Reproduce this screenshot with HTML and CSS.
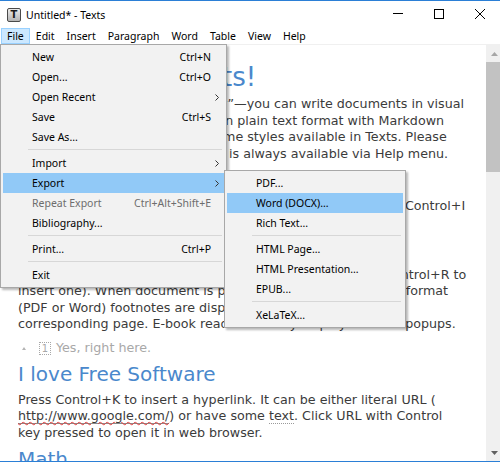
FILE: index.html
```html
<!DOCTYPE html>
<html>
<head>
<meta charset="utf-8">
<title>Untitled* - Texts</title>
<link rel="stylesheet" href="styles.css">
</head>
<body>
<div class="window">
  <div class="titlebar">
    <div class="app-icon">T</div>
    <div class="title">Untitled* - Texts</div>
    <div class="caption">
      <div class="cbtn"><svg width="10" height="10" viewBox="0 0 10 10"><path d="M0 4.5H10" stroke="#000" stroke-width="1"/></svg></div>
      <div class="cbtn"><svg width="10" height="10" viewBox="0 0 10 10"><rect x="0.5" y="0.5" width="9" height="9" fill="none" stroke="#000" stroke-width="1"/></svg></div>
      <div class="cbtn"><svg width="10" height="10" viewBox="0 0 10 10"><path d="M0 0L10 10M10 0L0 10" stroke="#000" stroke-width="1"/></svg></div>
    </div>
  </div>
  <div class="menubar">
    <span class="mitem active">File</span>
    <span class="mitem">Edit</span>
    <span class="mitem">Insert</span>
    <span class="mitem">Paragraph</span>
    <span class="mitem">Word</span>
    <span class="mitem">Table</span>
    <span class="mitem">View</span>
    <span class="mitem">Help</span>
  </div>
  <div class="rule"></div>
  <div class="main">
    <div class="doc">
      <h1 class="h1">Welcome to Texts!</h1>
      <p class="para">Texts is “semantic markup editor”—you can write documents in visual<br>editor and save your document in plain text format with Markdown<br>syntax. Here are examples of some styles available in Texts. Please<br>note that the full documentation is always available via Help menu.</p>
      <h2 class="h2">Italic and bold</h2>
      <p class="para">Select the text and press Control+B to make it bold or press Control+I<br>to make it italic.</p>
      <h2 class="h2">Footnotes</h2>
      <p class="para">Footnotes are numbered automatically by the app (press Control+R to<br>insert one). When document is printed or exported to paged format<br>(PDF or Word) footnotes are displayed at the bottom of<br>corresponding page. E-book readers usually display notes in popups.</p>
      <div class="footnote"><span class="fn-toggle"></span><span class="fn-num">1</span><span class="fn-text">Yes, right here.</span></div>
      <h2 class="h2">I love Free Software</h2>
      <p class="para">Press Control+K to insert a hyperlink. It can be either literal URL (<br><span class="url">http://www.google.com/</span>) or have some <span class="named-link">text</span>. Click URL with Control<br>key pressed to open it in web browser.</p>
      <h2 class="h2">Math</h2>
    </div>
    <div class="scrollbar">
      <div class="sb-btn"><svg width="7" height="4" viewBox="0 0 7 4"><path d="M0 4L3.5 0L7 4Z" fill="#a6a6a6"/></svg></div>
      <div class="sb-track"><div class="sb-thumb"></div></div>
      <div class="sb-btn"><svg width="7" height="4" viewBox="0 0 7 4"><path d="M0 0L3.5 4L7 0Z" fill="#606060"/></svg></div>
    </div>
  </div>

  <div class="menu file-menu">
    <div class="mi"><span class="label">New</span><span class="key">Ctrl+N</span><span class="arrow"></span></div>
    <div class="mi"><span class="label">Open...</span><span class="key">Ctrl+O</span><span class="arrow"></span></div>
    <div class="mi"><span class="label">Open Recent</span><span class="key"></span><span class="arrow"><svg width="4" height="7" viewBox="0 0 4 7"><path d="M0.5 0.5L3.5 3.5L0.5 6.5" fill="none" stroke="#333" stroke-width="1"/></svg></span></div>
    <div class="mi"><span class="label">Save</span><span class="key">Ctrl+S</span><span class="arrow"></span></div>
    <div class="mi"><span class="label">Save As...</span><span class="key"></span><span class="arrow"></span></div>
    <div class="sep"></div>
    <div class="mi"><span class="label">Import</span><span class="key"></span><span class="arrow"><svg width="4" height="7" viewBox="0 0 4 7"><path d="M0.5 0.5L3.5 3.5L0.5 6.5" fill="none" stroke="#333" stroke-width="1"/></svg></span></div>
    <div class="mi hl"><span class="label">Export</span><span class="key"></span><span class="arrow"><svg width="4" height="7" viewBox="0 0 4 7"><path d="M0.5 0.5L3.5 3.5L0.5 6.5" fill="none" stroke="#333" stroke-width="1"/></svg></span></div>
    <div class="mi disabled"><span class="label">Repeat Export</span><span class="key">Ctrl+Alt+Shift+E</span><span class="arrow"></span></div>
    <div class="mi"><span class="label">Bibliography...</span><span class="key"></span><span class="arrow"></span></div>
    <div class="sep"></div>
    <div class="mi"><span class="label">Print...</span><span class="key">Ctrl+P</span><span class="arrow"></span></div>
    <div class="sep"></div>
    <div class="mi"><span class="label">Exit</span><span class="key"></span><span class="arrow"></span></div>
  </div>

  <div class="menu sub-menu">
    <div class="mi"><span class="label">PDF...</span></div>
    <div class="mi hl"><span class="label">Word (DOCX)...</span></div>
    <div class="mi"><span class="label">Rich Text...</span></div>
    <div class="sep"></div>
    <div class="mi"><span class="label">HTML Page...</span></div>
    <div class="mi"><span class="label">HTML Presentation...</span></div>
    <div class="mi"><span class="label">EPUB...</span></div>
    <div class="sep"></div>
    <div class="mi"><span class="label">XeLaTeX...</span></div>
  </div>
</div>
</body>
</html>
```

FILE: styles.css
```css
* { box-sizing: border-box; }
html, body { margin: 0; padding: 0; }
body {
  width: 500px;
  height: 462px;
  overflow: hidden;
  background: #ffffff;
  font-family: "Noto Sans", sans-serif;
}
.window {
  position: relative;
  width: 500px;
  height: 462px;
  border-top: 1px solid #2b7fd6;
  border-bottom: 1px solid #2b7fd6;
  display: flex;
  flex-direction: column;
  overflow: hidden;
  background: #ffffff;
}

/* title bar */
.titlebar {
  height: 27px;
  flex: none;
  display: flex;
  align-items: center;
}
.app-icon {
  margin-left: 7px;
  width: 14px;
  height: 14px;
  border: 1px solid #4a4a4a;
  border-radius: 2px;
  background: linear-gradient(#ececec, #b4b4b4);
  color: #1a1a1a;
  font-family: "DejaVu Sans", sans-serif;
  font-weight: bold;
  font-size: 10px;
  line-height: 12px;
  text-align: center;
}
.title {
  margin-left: 5px;
  font-size: 10.5px;
  color: #000;
}
.caption {
  margin-left: auto;
  align-self: stretch;
  display: flex;
}
.cbtn {
  width: 41px;
  display: flex;
  justify-content: center;
  padding-top: 8px;
}
.cbtn svg { display: block; }

/* menu bar */
.menubar {
  height: 16px;
  flex: none;
  display: flex;
  padding-left: 1px;
  font-size: 10.5px;
  color: #000;
}
.mitem {
  border: 1px solid transparent;
  padding: 0 5px;
  line-height: 14px;
}
.mitem.active {
  background: #cce8ff;
  border-color: #99d1ff;
}
.rule {
  height: 1px;
  flex: none;
  background: #f0f0f0;
}

/* document */
.main {
  flex: 1;
  min-height: 0;
  display: flex;
}
.doc {
  flex: 1;
  min-width: 0;
  overflow: hidden;
  padding: 16px 0 0 18px;
  font-family: "DejaVu Sans", sans-serif;
  font-size: 12.7px;
  line-height: 16.6px;
  color: #3b3b3b;
  white-space: nowrap;
}
.h1 {
  margin: 0 0 3.2px;
  font-size: 26px;
  line-height: 32px;
  font-weight: normal;
  color: #4a88cc;
}
.h2 {
  margin: 5.7px 0;
  font-size: 20px;
  line-height: 24px;
  font-weight: normal;
  color: #4a88cc;
}
.para { margin: 0; }
.footnote {
  margin-top: 7px;
  height: 16.6px;
  display: flex;
  align-items: center;
  color: #a8a8a8;
}
.fn-toggle {
  margin-left: 4px;
  width: 0;
  height: 0;
  border-left: 2.5px solid transparent;
  border-right: 2.5px solid transparent;
  border-bottom: 3px solid #b4b4b4;
}
.fn-num {
  margin-left: 13px;
  width: 12px;
  height: 13px;
  border: 1px dotted #a8a8a8;
  font-size: 10px;
  line-height: 11px;
  text-align: center;
}
.fn-text { margin-left: 5px; }
.url {
  border-bottom: 1px solid #8a8a8a;
  text-decoration: underline wavy #e23b3b;
  text-decoration-thickness: 1px;
  text-underline-offset: 1px;
}
.named-link { border-bottom: 1px dotted #9a9a9a; }

/* scrollbar */
.scrollbar {
  width: 14px;
  flex: none;
  background: #f0f0f0;
  display: flex;
  flex-direction: column;
}
.sb-btn {
  height: 17px;
  flex: none;
  display: flex;
  align-items: center;
  justify-content: center;
  padding-left: 2px;
}
.sb-btn svg { display: block; }
.sb-track { flex: 1; }
.sb-thumb {
  height: 110px;
  background: #c2c2c2;
}

/* popup menus */
.menu {
  position: absolute;
  background: #f2f2f2;
  border: 1px solid #a8a8a8;
  padding: 2px;
  box-shadow: 2px 2px 2px rgba(0, 0, 0, 0.28);
  font-family: "Noto Sans", sans-serif;
  font-size: 10.5px;
  color: #000;
}
.file-menu { left: 0; top: 43px; width: 227px; }
.sub-menu { left: 224px; top: 169px; width: 182px; }
.mi {
  height: 20px;
  display: flex;
  align-items: center;
  padding-left: 29px;
}
.mi .label { flex: 1; }
.mi .arrow {
  width: 13px;
  display: flex;
  justify-content: flex-start;
  padding-left: 4px;
}
.mi .arrow svg { display: block; }
.mi.hl { background: #91c9f7; }
.mi.disabled { color: #6d6d6d; }
.sep {
  height: 1px;
  margin: 2px 2px 3px 25px;
  background: #d7d7d7;
}
```
